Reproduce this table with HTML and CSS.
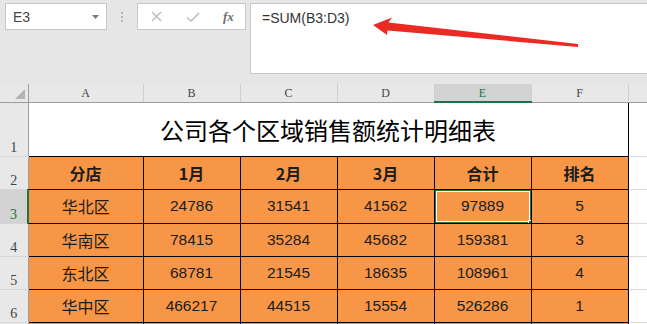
FILE: index.html
```html
<!DOCTYPE html>
<html lang="zh">
<head>
<meta charset="utf-8">
<title>Sheet</title>
<link rel="stylesheet" href="styles.css">
</head>
<body>
<div class="app">
  <div class="toolbar">
    <div class="namebox">
      <span class="cellref">E3</span>
      <svg class="dd" width="7" height="4" viewBox="0 0 7 4"><path d="M0 0H7L3.5 4Z" fill="#7a7a7a"/></svg>
    </div>
    <div class="dots"><i></i><i></i><i></i></div>
    <div class="fbtns">
      <svg class="ic-x" width="11" height="11" viewBox="0 0 11 11"><path d="M1 1L10 10M10 1L1 10" stroke="#bdbdbd" stroke-width="1.5" fill="none"/></svg>
      <svg class="ic-ok" width="14" height="10" viewBox="0 0 14 10"><path d="M1 5.5L5 9L13 1" stroke="#bdbdbd" stroke-width="1.6" fill="none"/></svg>
      <span class="fx">fx</span>
    </div>
    <div class="formula">=SUM(B3:D3)</div>
  </div>

  <table class="sheet">
    <colgroup>
      <col class="c-rh"><col class="c-a"><col class="c-n"><col class="c-n"><col class="c-n"><col class="c-n"><col class="c-n"><col class="c-x">
    </colgroup>
    <tr class="r-head">
      <th class="corner"><span class="tri"></span></th>
      <th>A</th><th>B</th><th>C</th><th>D</th><th class="hsel">E</th><th>F</th><th class="hx"></th>
    </tr>
    <tr class="r-title">
      <th class="rh">1</th>
      <td class="title" colspan="6">公司各个区域销售额统计明细表</td>
      <td class="ex"></td>
    </tr>
    <tr class="r-data">
      <th class="rh">2</th>
      <td class="hd">分店</td><td class="hd">1月</td><td class="hd">2月</td><td class="hd">3月</td><td class="hd">合计</td><td class="hd">排名</td>
      <td class="ex"></td>
    </tr>
    <tr class="r-data r3">
      <th class="rh rsel">3</th>
      <td class="zh">华北区</td><td>24786</td><td>31541</td><td>41562</td><td class="sel">97889</td><td>5</td>
      <td class="ex"></td>
    </tr>
    <tr class="r-data">
      <th class="rh">4</th>
      <td class="zh">华南区</td><td>78415</td><td>35284</td><td>45682</td><td>159381</td><td>3</td>
      <td class="ex"></td>
    </tr>
    <tr class="r-data">
      <th class="rh">5</th>
      <td class="zh">东北区</td><td>68781</td><td>21545</td><td>18635</td><td>108961</td><td>4</td>
      <td class="ex"></td>
    </tr>
    <tr class="r-data">
      <th class="rh">6</th>
      <td class="zh">华中区</td><td>466217</td><td>44515</td><td>15554</td><td>526286</td><td>1</td>
      <td class="ex"></td>
    </tr>
    <tr class="r-data">
      <th class="rh"></th>
      <td></td><td></td><td></td><td></td><td></td><td></td>
      <td class="ex"></td>
    </tr>
  </table>

  <svg class="arrow" width="647" height="80" viewBox="0 0 647 80">
    <polygon points="373,25 392,17.5 388.5,22.5 578,44 578,47 387.5,30.5 387,35" fill="#ec2a24"/>
  </svg>
</div>
</body>
</html>
```

FILE: styles.css
```css
html, body {
  margin: 0;
  padding: 0;
  background: #e6e6e6;
  overflow: hidden;
}
.app {
  position: relative;
  width: 647px;
  height: 324px;
  overflow: hidden;
  font-family: "Liberation Sans", "Noto Sans CJK SC", sans-serif;
}
.toolbar {
  display: flex;
  align-items: flex-start;
  height: 84px;
  box-sizing: border-box;
  padding-top: 3px;
}
.namebox {
  margin-left: 5px;
  width: 102px;
  height: 27px;
  box-sizing: border-box;
  border: 1px solid #c8c8c8;
  background: #fff;
  display: flex;
  align-items: center;
  justify-content: space-between;
  padding: 0 7px 0 7px;
}
.cellref {
  font-size: 14px;
  color: #454545;
}
.dd { margin-top: 1px; }
.dots {
  width: 30px;
  height: 27px;
  display: flex;
  flex-direction: column;
  align-items: center;
  justify-content: center;
  gap: 2px;
}
.dots i {
  display: block;
  width: 2px;
  height: 2px;
  background: #b4b4b4;
}
.fbtns {
  width: 109px;
  height: 27px;
  box-sizing: border-box;
  border: 1px solid #c8c8c8;
  background: #fff;
  display: flex;
  align-items: center;
  padding-left: 13px;
}
.ic-ok { margin-left: 24px; }
.fx {
  margin-left: 23px;
  font-family: "Liberation Serif", serif;
  font-style: italic;
  font-weight: bold;
  font-size: 13px;
  color: #6e6e6e;
}
.formula {
  margin-left: 4px;
  flex: 1;
  height: 71px;
  box-sizing: border-box;
  border: 1px solid #c8c8c8;
  border-right: none;
  background: #fff;
  padding: 6px 0 0 11px;
  font-size: 14px;
  color: #333;
}

.sheet {
  border-collapse: collapse;
  table-layout: fixed;
  width: 700px;
  background: #fff;
}
.c-rh { width: 28px; }
.c-a { width: 115px; }
.c-n { width: 97px; }
.c-x { width: 72px; }

.sheet th, .sheet td {
  padding: 0;
  text-align: center;
  overflow: hidden;
  white-space: nowrap;
}
.r-head { height: 18px; }
.r-head th {
  background: #e8e8e8;
  font-family: "Liberation Serif", serif;
  font-weight: normal;
  font-size: 12px;
  color: #444;
  border-left: 1px solid #cfcfcf;
  border-right: 1px solid #cfcfcf;
  border-bottom: 1px solid #9d9d9d;
  vertical-align: middle;
  padding-top: 2px;
}
.r-head .corner {
  position: relative;
  border-left: none;
  border-right: 1px solid #9d9d9d;
}
.tri {
  position: absolute;
  right: 3px;
  bottom: 3px;
  width: 0;
  height: 0;
  border-left: 10px solid transparent;
  border-bottom: 10px solid #b4b4b4;
}
.r-head .hsel {
  background: #d3d3d3;
  color: #217346;
  border-bottom: 2px solid #217346;
}
.r-head .hx { border-right: none; }

.rh {
  background: #e8e8e8;
  font-family: "Liberation Serif", serif;
  font-weight: normal;
  font-size: 14px;
  color: #444;
  vertical-align: bottom;
  padding-bottom: 1px !important;
  border-right: 1px solid #9d9d9d;
  border-bottom: 1px solid #d6d6d6;
  line-height: 15px;
}
.rh.rsel {
  background: #d3d3d3;
  color: #217346;
  border-right: 2px solid #217346;
}

.r-title { height: 54px; }
.title {
  background: #fff;
  border: 1px solid #000;
  font-family: "Noto Sans CJK SC", sans-serif;
  font-size: 24px;
  color: #000;
  vertical-align: middle;
}
.ex {
  background: #fff;
  border-bottom: 1px solid #dadada;
}

.r-data { height: 33px; }
.r3 { height: 34px; }
.r-data td {
  background: #f79646;
  border: 1px solid #000;
  font-size: 15.5px;
  color: #1c1c1c;
  vertical-align: middle;
}
.r-data td.ex {
  background: #fff;
  border: none;
  border-bottom: 1px solid #dadada;
  border-left: 1px solid #000;
}
.r-data td.hd {
  font-family: "Noto Sans CJK SC", sans-serif;
  font-weight: bold;
  font-size: 16px;
}
.r-data td.zh {
  font-family: "Noto Sans CJK SC", sans-serif;
  font-size: 16px;
}
.r-data td.sel {
  position: relative;
}
.sel::after {
  content: "";
  position: absolute;
  left: -1px;
  top: -1px;
  right: -1px;
  bottom: -1px;
  border: 2px solid #217346;
  box-shadow: inset 0 0 0 1px #fff;
}
.sel::before {
  content: "";
  position: absolute;
  right: -4px;
  bottom: -4px;
  width: 5px;
  height: 5px;
  background: #217346;
  border: 1px solid #fff;
  z-index: 2;
}

.arrow {
  position: absolute;
  left: 0;
  top: 0;
  pointer-events: none;
}
```
